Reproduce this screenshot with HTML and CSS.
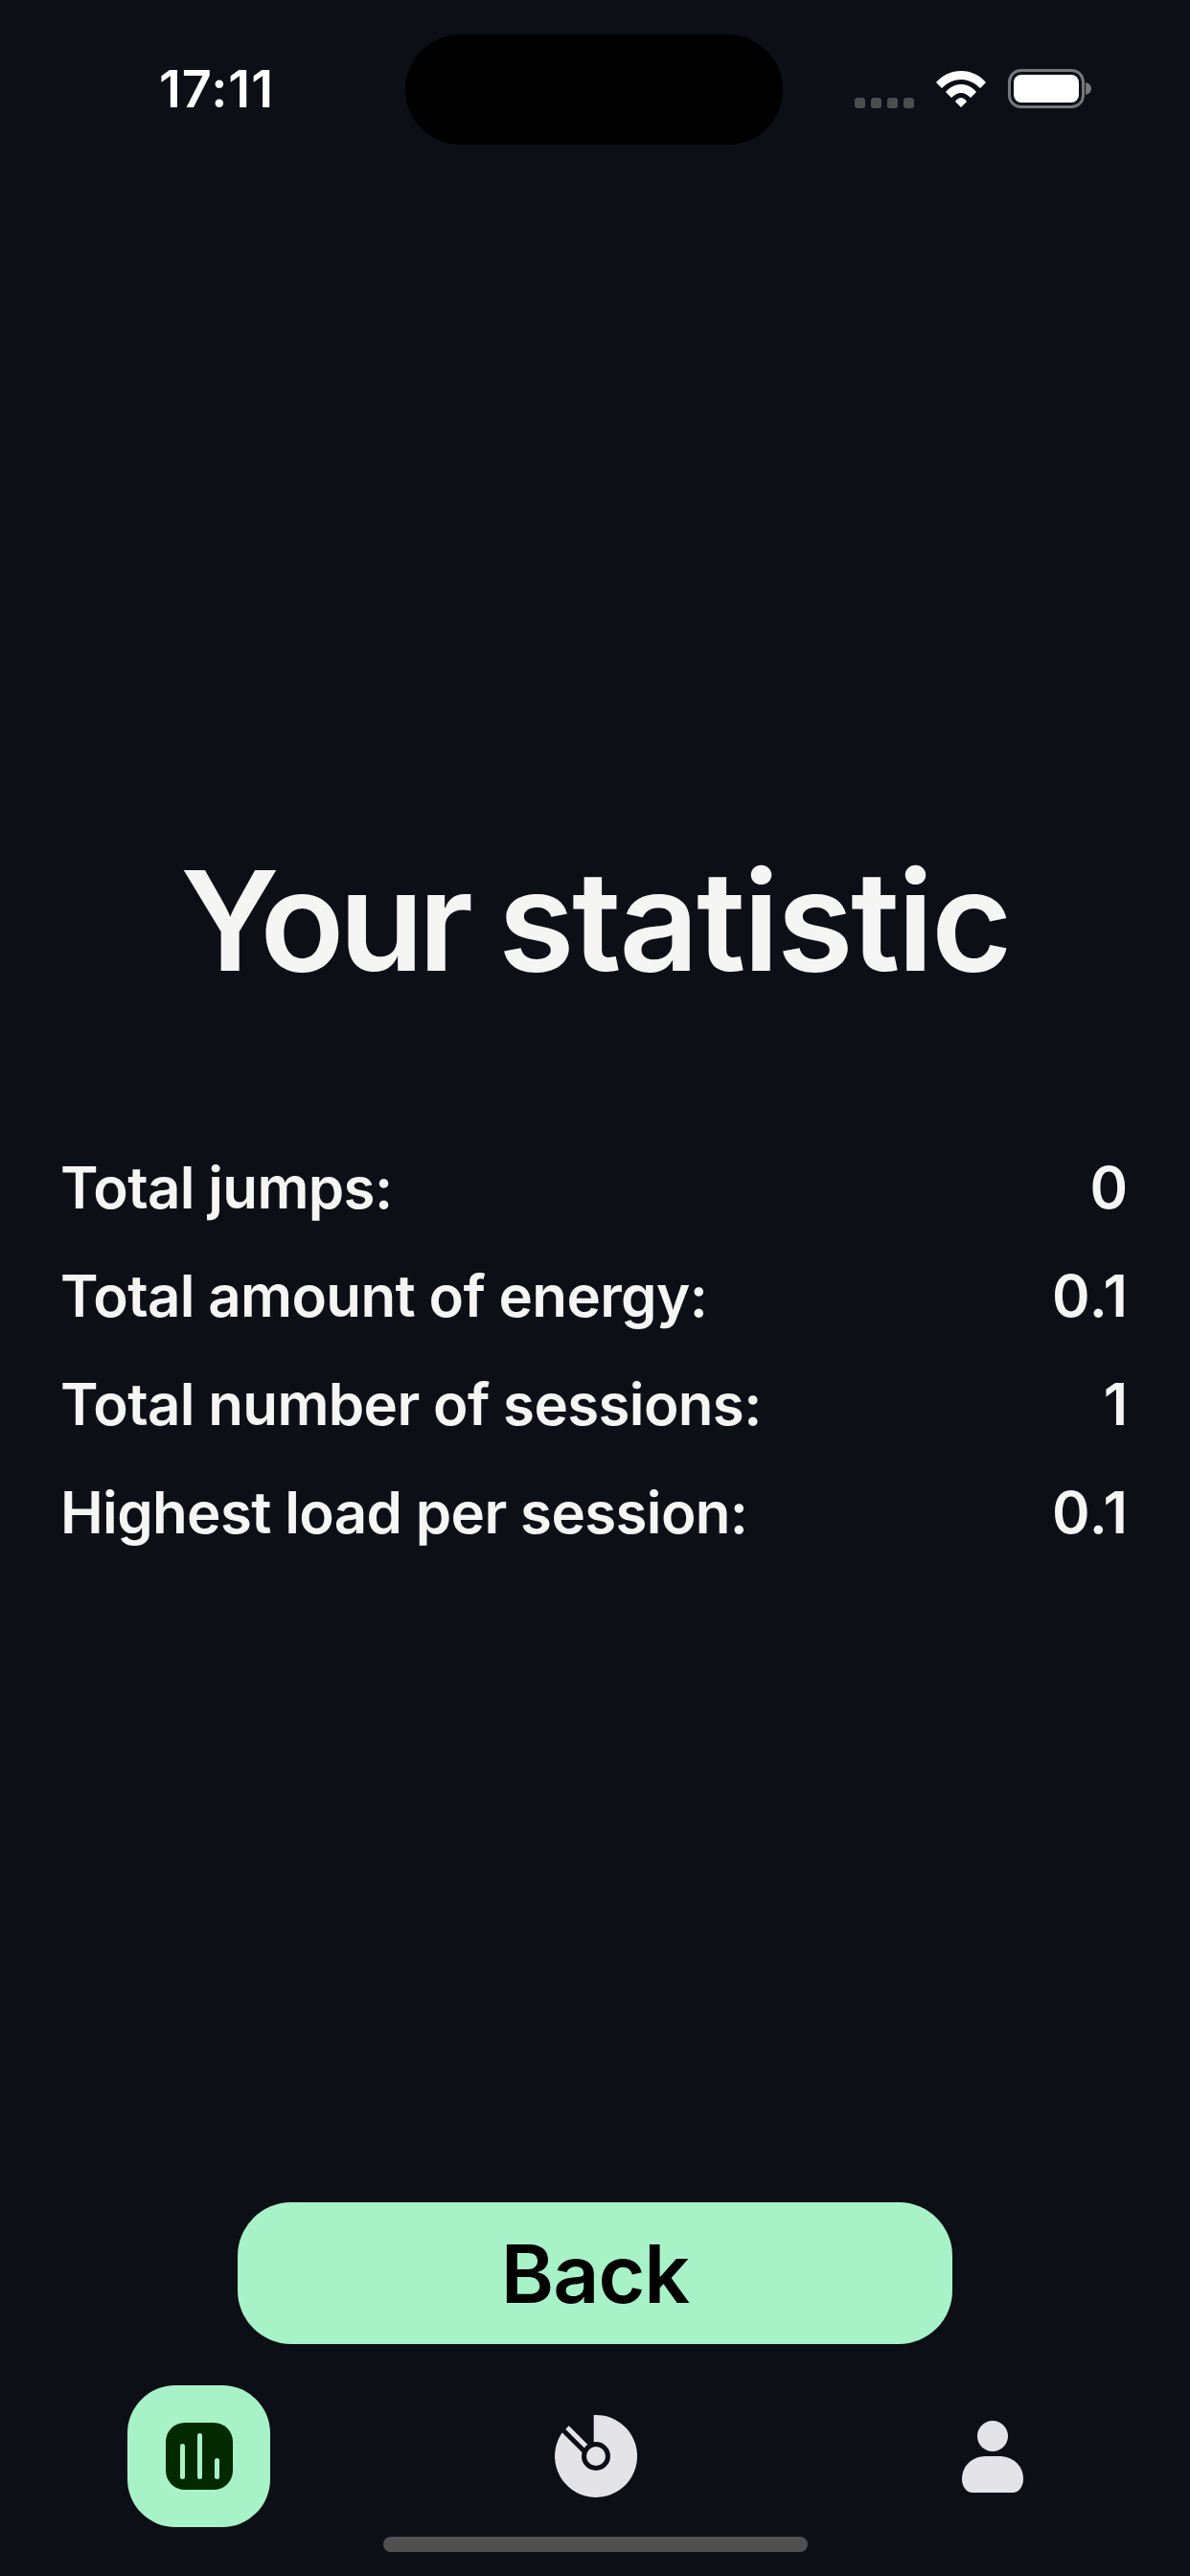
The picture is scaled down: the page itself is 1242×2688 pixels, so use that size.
FILE: index.html
```html
<!DOCTYPE html>
<html>
<head>
    <title>Your statistic</title>
    <link rel="stylesheet" href="styles.css">
</head>
<body>
    <div class="screen">
        <div class="status-bar">
            <span class="time">17:11</span>
            <div class="island"></div>
            <div class="status-icons">
                <div class="signal"><i></i><i></i><i></i><i></i></div>
                <svg class="wifi" width="54" height="40" viewBox="0 0 54 40">
                    <path d="M1 13 C8 5 17 1 27 1 C37 1 46 5 53 13 L47 19 C41 13 34 10 27 10 C20 10 13 13 7 19 Z" fill="#fff"/>
                    <path d="M11 23 C15 18 21 15 27 15 C33 15 39 18 43 23 L37 29 C34 26 31 24 27 24 C23 24 20 26 17 29 Z" fill="#fff"/>
                    <path d="M21 33 C23 30 25 29 27 29 C29 29 31 30 33 33 L27 39 Z" fill="#fff"/>
                </svg>
                <svg class="battery" width="87" height="41" viewBox="0 0 87 41">
                    <rect x="1.5" y="1.5" width="77" height="38" rx="12" fill="none" stroke="#77787c" stroke-width="3"/>
                    <rect x="6" y="6" width="68" height="29" rx="8" fill="#fff"/>
                    <path d="M81 14 C85 15 87 17 87 20.5 C87 24 85 26 81 27 Z" fill="#77787c"/>
                </svg>
            </div>
        </div>

        <main class="content">
            <h1 class="title"><span class="title-first">Your</span> statistic</h1>
            <div class="stats">
                <div class="stat-row"><span>Total jumps:</span><span class="stat-value">0</span></div>
                <div class="stat-row"><span>Total amount of energy:</span><span class="stat-value">0.1</span></div>
                <div class="stat-row"><span>Total number of sessions:</span><span class="stat-value">1</span></div>
                <div class="stat-row"><span>Highest load per session:</span><span class="stat-value">0.1</span></div>
            </div>
        </main>

        <div class="actions">
            <button class="back-btn">Back</button>
        </div>

        <nav class="tab-bar">
            <div class="tab tab-active">
                <svg width="70" height="70" viewBox="0 0 70 70">
                    <rect width="70" height="70" rx="20" fill="#022900"/>
                    <rect x="15" y="22" width="5" height="37" rx="2.5" fill="#a8f2c7"/>
                    <rect x="33" y="11" width="5" height="48" rx="2.5" fill="#a8f2c7"/>
                    <rect x="51" y="37" width="5" height="22" rx="2.5" fill="#a8f2c7"/>
                </svg>
            </div>
            <div class="tab">
                <svg width="90" height="90" viewBox="0 0 90 90">
                    <path d="M42.7 2 A43 43 0 1 1 10 20 L42.7 45 Z" fill="#e4e3e8"/>
                    <path d="M5 5 L45 45" stroke="#0c0f16" stroke-width="15"/>
                    <path d="M15 15 L45 45" stroke="#e4e3e8" stroke-width="5"/>
                    <circle cx="45" cy="45" r="15" fill="#0c0f16"/>
                    <circle cx="45" cy="45" r="10" fill="#e4e3e8"/>
                </svg>
            </div>
            <div class="tab">
                <svg width="66" height="76" viewBox="0 0 66 76">
                    <circle cx="33" cy="17" r="16" fill="#e4e3e8"/>
                    <path d="M1 62 C1 46 14 38 26 38 L40 38 C52 38 65 46 65 62 C65 70 60 76 54 76 L12 76 C6 76 1 70 1 62 Z" fill="#e4e3e8"/>
                </svg>
            </div>
        </nav>

        <div class="home-bar"></div>
    </div>
</body>
</html>
```

FILE: styles.css
```css
body {
    margin: 0;
    background-color: #0c0f16;
    font-family: Inter, "Liberation Sans", sans-serif;
    color: #f5f5f3;
}

.screen {
    width: 1242px;
    height: 2688px;
    display: flex;
    flex-direction: column;
    overflow: hidden;
}

.status-bar {
    height: 115px;
    padding: 36px 0 0 166px;
    display: flex;
    align-items: flex-start;
    flex-shrink: 0;
}

.time {
    width: 257px;
    font-size: 54px;
    font-weight: 600;
    letter-spacing: 1px;
    line-height: 113px;
    color: #fff;
}

.island {
    width: 394px;
    height: 115px;
    margin-right: 75px;
    background-color: #000;
    border-radius: 58px;
}

.status-icons {
    display: flex;
    align-items: flex-end;
    gap: 22px;
    margin-top: 36px;
}

.signal {
    display: flex;
    gap: 6px;
}

.signal i {
    display: block;
    width: 11px;
    height: 11px;
    background-color: #4c4d50;
    border-radius: 3px;
}

.content {
    flex: 1;
    padding-top: 725px;
}

.title {
    margin: 0;
    text-align: center;
    font-size: 145px;
    font-weight: 600;
    letter-spacing: -2.6px;
    word-spacing: -2px;
    line-height: 170px;
}

.title-first {
    letter-spacing: -6px;
}

.stats {
    margin-top: 137px;
    padding: 0 64px 0 63px;
}

.stat-row {
    display: flex;
    justify-content: space-between;
    font-size: 60px;
    font-weight: 600;
    letter-spacing: -0.65px;
    line-height: 113px;
}

.stat-value {
    letter-spacing: 1px;
}

.actions {
    display: flex;
    justify-content: center;
    flex-shrink: 0;
}

.back-btn {
    width: 746px;
    height: 148px;
    border: none;
    border-radius: 56px;
    background-color: #a8f2c7;
    color: #000;
    font-family: inherit;
    font-size: 84px;
    font-weight: 600;
    letter-spacing: -1px;
}

.tab-bar {
    display: flex;
    justify-content: space-between;
    align-items: center;
    padding: 43px 132px 0 133px;
    flex-shrink: 0;
}

.tab {
    width: 149px;
    height: 148px;
    display: flex;
    align-items: center;
    justify-content: center;
}

.tab-active {
    background-color: #a8f2c7;
    border-radius: 50px;
}

.home-bar {
    width: 443px;
    height: 16px;
    margin: 10px auto 25px;
    background-color: #505050;
    border-radius: 8px;
    flex-shrink: 0;
}
```
